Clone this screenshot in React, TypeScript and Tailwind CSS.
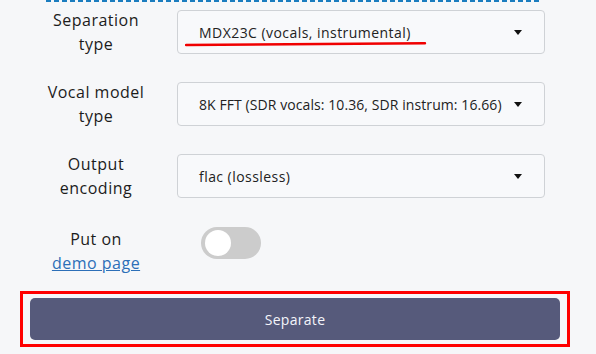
const font = { fontFamily: '"Open Sans", "Liberation Sans", sans-serif' };

function Caret() {
  return (
    <svg width="8" height="5" viewBox="0 0 8 5" className="shrink-0">
      <path d="M0 0 L8 0 L4 5 Z" fill="#111" />
    </svg>
  );
}

function SelectBox({
  value,
  mark,
  textClass = "tracking-[0.45px]",
}: {
  value: string;
  mark?: boolean;
  textClass?: string;
}) {
  return (
    <div className="relative flex h-[44px] items-center justify-between rounded-[4px] border border-[#cfd2d6] bg-[#f8f9fb] pl-[21px] pr-[22px]">
      <span className={`whitespace-nowrap text-[14px] text-[#222] ${textClass}`}>{value}</span>
      <Caret />
      {mark && (
        <svg
          className="pointer-events-none absolute left-[7px] top-[30px]"
          width="242"
          height="6"
          viewBox="0 0 242 6"
        >
          <path
            d="M1 4 C60 3.2 140 2.6 240 2.2"
            stroke="#f00000"
            strokeWidth="2.4"
            fill="none"
            strokeLinecap="round"
          />
        </svg>
      )}
    </div>
  );
}

function Label({ children }: { children: React.ReactNode }) {
  return (
    <div className="text-center text-[16px] leading-[24px] tracking-[0.5px] text-[#1c1c1c]">
      {children}
    </div>
  );
}

export default function App() {
  return (
    <div
      className="h-[354px] w-[596px] overflow-hidden bg-[#f6f7f9]"
      style={font}
    >
      <div className="ml-[46px] h-[2px] w-[494px] bg-[repeating-linear-gradient(90deg,#1b7dbf_0_5px,transparent_5px_8px)]" />

      <div className="mt-[6px] flex flex-col gap-[24px] pl-[20px]">
        <div className="grid h-[48px] grid-cols-[152px_368px] items-center gap-x-[5px]">
          <Label>
            Separation
            <br />
            type
          </Label>
          <SelectBox value="MDX23C (vocals, instrumental)" mark />
        </div>

        <div className="grid h-[48px] grid-cols-[152px_368px] items-center gap-x-[5px]">
          <Label>
            Vocal model
            <br />
            type
          </Label>
          <SelectBox
            value="8K FFT (SDR vocals: 10.36, SDR instrum: 16.66)"
            textClass="tracking-[0.08px]"
          />
        </div>

        <div className="grid h-[48px] grid-cols-[152px_368px] items-center gap-x-[5px]">
          <Label>
            Output
            <br />
            encoding
          </Label>
          <SelectBox value="flac (lossless)" />
        </div>

        <div className="mt-[3px] grid h-[48px] grid-cols-[152px_368px] items-start gap-x-[5px]">
          <Label>
            Put on
            <br />
            <a href="#" className="text-[#2c6fb8] underline">
              demo page
            </a>
          </Label>
          <div className="pl-[24px] pt-[0px]">
            <div className="flex h-[32px] w-[60px] items-center rounded-full bg-[#cccccc] px-[4px]">
              <div className="h-[26px] w-[26px] rounded-full bg-white" />
            </div>
          </div>
        </div>
      </div>

      <div className="ml-[20px] mt-[16px] w-[550px] border-[3px] border-[#ff0000] px-[7px] py-[4px]">
        <button className="flex h-[42px] w-full items-center justify-center rounded-[5px] bg-[#565a7b] text-[14px] tracking-[0.3px] text-[#f4f5fa]">
          Separate
        </button>
      </div>
    </div>
  );
}
